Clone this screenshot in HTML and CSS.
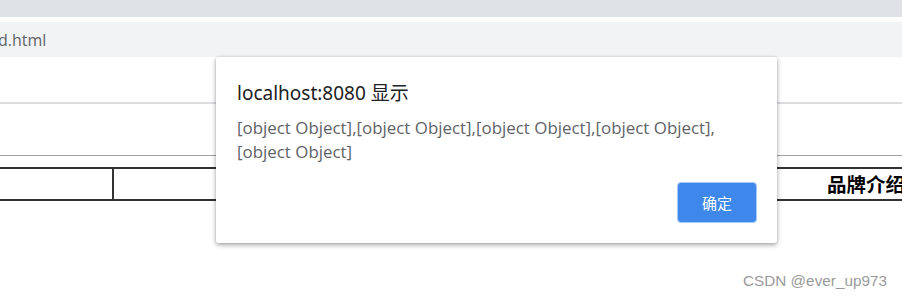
FILE: index.html
```html
<!DOCTYPE html>
<html lang="zh-CN">
<head>
  <meta charset="UTF-8" />
  <title>brand.html</title>
  <link rel="stylesheet" href="styles.css">
</head>
<body>

<div class="tabstrip"></div>
<div class="toolbar">
  <span class="url">d.html</span>
</div>

<main class="page">
  <hr class="rule-light">
  <hr class="rule-gray">
  <div class="brand-table">
    <div class="cell first"></div>
    <div class="cell wide"></div>
    <div class="cell head">品牌介绍</div>
  </div>
</main>

<div class="dialog">
  <div class="dialog-title">localhost:8080 显示</div>
  <div class="dialog-msg">[object Object],[object Object],[object Object],[object Object],<br>[object Object]</div>
  <div class="dialog-actions">
    <button class="ok">确定</button>
  </div>
</div>

<div class="watermark">CSDN @ever_up973</div>

</body>
</html>
```

FILE: styles.css
```css
html, body {
  margin: 0;
  height: 100%;
  overflow: hidden;
}

body {
  font-family: "Noto Sans", "Noto Sans CJK SC", sans-serif;
  background: #fff;
  color: #202124;
  position: relative;
}

.tabstrip {
  height: 17px;
  background: #dee1e6;
  border-bottom: 5px solid #fff;
}

.toolbar {
  height: 35px;
  background: #f1f3f4;
  display: flex;
  align-items: center;
  overflow: hidden;
}

.url {
  font-family: "Open Sans", "Noto Sans", sans-serif;
  font-size: 16px;
  color: #5f6368;
  margin-left: -2px;
}

.page {
  width: 1000px;
}

.rule-light {
  margin: 45px 0 0;
  border: none;
  height: 2px;
  background: #dadce0;
}

.rule-gray {
  margin: 51px 0 0;
  border: none;
  height: 1px;
  background: #a0a0a0;
}

.brand-table {
  margin-top: 11px;
  display: flex;
  height: 30px;
  border-top: 2px solid #333;
  border-bottom: 2px solid #333;
}

.cell.first {
  width: 112px;
  border-right: 2px solid #333;
}

.cell.wide {
  width: 713px;
}

.cell.head {
  font-family: "Noto Sans CJK SC", sans-serif;
  font-weight: bold;
  font-size: 19.5px;
  line-height: 30px;
  color: #000;
  white-space: nowrap;
}

.dialog {
  position: absolute;
  left: 216px;
  top: 57px;
  width: 561px;
  height: 186px;
  box-sizing: border-box;
  padding: 20px 20px 20px 21px;
  background: #fff;
  border-radius: 2px;
  box-shadow: 0 2px 5px rgba(0, 0, 0, 0.35), 0 0 2px rgba(0, 0, 0, 0.15);
  display: flex;
  flex-direction: column;
}

.dialog-title {
  font-size: 19px;
  line-height: 26px;
  margin-top: 3px;
  color: #202124;
  white-space: nowrap;
}

.dialog-msg {
  font-family: "Open Sans", "Noto Sans", sans-serif;
  font-size: 16.9px;
  line-height: 24px;
  margin-top: 10px;
  color: #5f6368;
  white-space: nowrap;
}

.dialog-actions {
  margin-top: auto;
  display: flex;
  justify-content: flex-end;
}

.ok {
  width: 80px;
  height: 41px;
  background: #3f88eb;
  border: 1px solid #a8c7fa;
  border-radius: 4px;
  color: #fff;
  font-family: "Noto Sans CJK SC", sans-serif;
  font-size: 15px;
}

.watermark {
  position: absolute;
  left: 743px;
  top: 272px;
  font-family: "Liberation Sans", Arial, sans-serif;
  font-size: 15.3px;
  color: #9a9a9a;
  white-space: nowrap;
}
```
